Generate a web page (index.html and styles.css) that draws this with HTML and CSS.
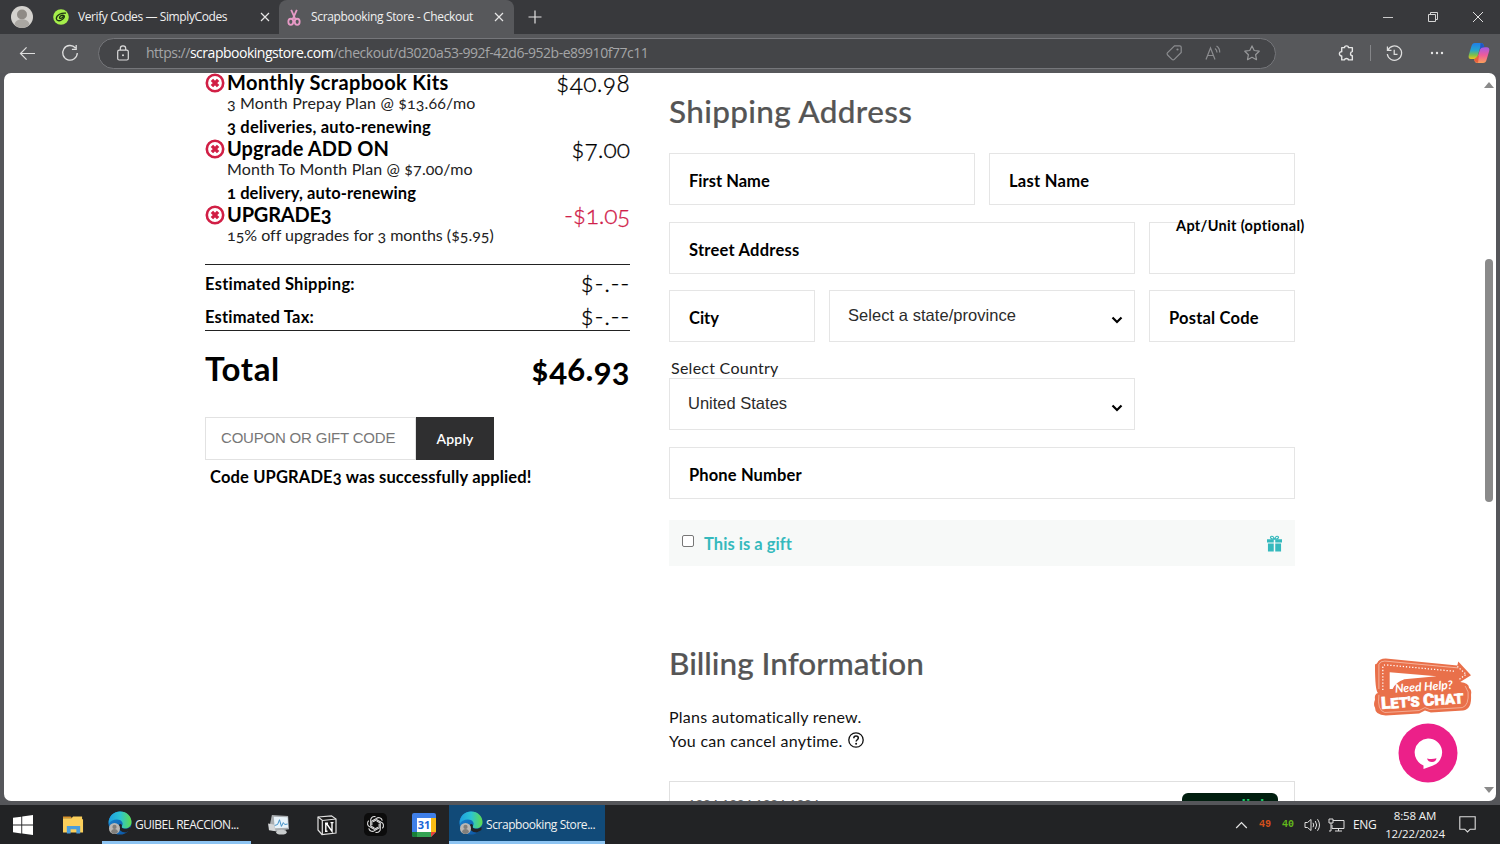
FILE: index.html
```html
<!DOCTYPE html>
<html lang="en">
<head>
<meta charset="utf-8">
<title>Scrapbooking Store - Checkout</title>
<link rel="stylesheet" href="styles.css">
</head>
<body>
<svg class="defs" width="0" height="0">
  <defs>
    <linearGradient id="edgeTop" x1="0" y1="0" x2="1" y2="0"><stop offset="0" stop-color="#1f9fe0"/><stop offset=".5" stop-color="#2cc3d2"/><stop offset="1" stop-color="#5fdc4c"/></linearGradient>
    <linearGradient id="edgeLow" x1="0" y1="0" x2="1" y2="1"><stop offset="0" stop-color="#1a8ad8"/><stop offset="1" stop-color="#0c4f9c"/></linearGradient>
    <linearGradient id="copA" x1="0" y1="0" x2="0" y2="1"><stop offset="0" stop-color="#1f7fe8"/><stop offset=".45" stop-color="#25a5cf"/><stop offset=".75" stop-color="#7cc04a"/><stop offset="1" stop-color="#f0c41c"/></linearGradient>
    <linearGradient id="copB" x1="0" y1="0" x2="0" y2="1"><stop offset="0" stop-color="#a15be8"/><stop offset=".5" stop-color="#ee5b9a"/><stop offset="1" stop-color="#fba05a"/></linearGradient>
    <symbol id="edge" viewBox="0 0 24 24">
      <circle cx="12" cy="12" r="11.500" fill="url(#edgeLow)"/>
      <path d="M.8 10C2 4 6.500.5 12 .5c7 0 11.500 5 11.500 10.500 0 4-3 6.500-6.500 6.500-2.500 0-4-1-3-2.500 2-3-.5-6.500-5-6.500C5 8.500 2 10 .8 13z" fill="url(#edgeTop)"/>
      <path d="M14 15c-1 1.500.5 2.800 3 2.800 2.500 0 4.500-.9 5.500-2.300v3.500L18 21.500c-5 0-8-3-7-7.500 1-2 3-.5 3 1z" class="edge-cut"/>
      <circle cx="6.500" cy="17.500" r="5.500" fill="#b9b7b4"/><circle cx="6.500" cy="15.900" r="2.100" fill="#807e7b"/><path d="M3 21c.3-4 6.700-4 7 0-1.800 2.500-5.200 2.500-7 0z" fill="#807e7b"/>
    </symbol>
    <symbol id="remove" viewBox="0 0 20 20"><circle cx="10" cy="10" r="8.200" fill="#fff" stroke="#d11f45" stroke-width="2.600"/><path d="M6.900 6.900l6.200 6.200M13.100 6.900l-6.200 6.200" stroke="#d11f45" stroke-width="3.400"/></symbol>
    <symbol id="close" viewBox="0 0 10 10"><path d="M1 1l8 8M9 1L1 9" fill="none" stroke="#e6e6e6" stroke-width="1.200"/></symbol>
    <symbol id="chev" viewBox="0 0 12 8"><path d="M1.500 1.500L6 6l4.500-4.500" fill="none" stroke="#000" stroke-width="2.200"/></symbol>
  </defs>
</svg>

<header class="titlebar">
  <svg class="avatar" viewBox="0 0 22 22"><circle cx="11" cy="11" r="11" fill="#d4d2ce"/><circle cx="11" cy="8.500" r="5" fill="#8f8b86"/><path d="M3.500 18.500c1-7 14-7 15 0-4 4.500-11 4.500-15 0z" fill="#aaa7a2"/></svg>
  <div class="tab">
    <svg class="tab-ic" viewBox="0 0 16 16"><circle cx="8" cy="8" r="7.800" fill="#a6ef4b"/><path d="M13 4.200C8.500 3.500 3.500 6 3.300 9.500c.2 2.500 3 2.800 5.200 1.500s3.200-3 2.700-4.200C9.500 5.500 6.300 7 6.500 9c1 1 2.500.3 4-1.800" fill="none" stroke="#1c3312" stroke-width="1.300"/></svg>
    <span class="tab-t t1">Verify Codes — SimplyCodes</span>
    <svg class="tab-x"><use href="#close"/></svg>
  </div>
  <div class="tab active">
    <svg class="tab-ic sc" viewBox="0 0 16 18"><g fill="none" stroke="#e79ac6" stroke-width="1.900"><path d="M5 1l4.500 10M11 1L6.500 11"/><ellipse cx="4.600" cy="13.500" rx="2.600" ry="3.200"/><ellipse cx="11.400" cy="13.500" rx="2.600" ry="3.200"/></g></svg>
    <span class="tab-t t2">Scrapbooking Store - Checkout</span>
    <svg class="tab-x"><use href="#close"/></svg>
  </div>
  <svg class="plus" viewBox="0 0 14 14"><path d="M7 .5v13M.5 7h13" stroke="#e3e3e3" stroke-width="1.200"/></svg>
  <div class="winctl">
    <svg viewBox="0 0 12 12"><path d="M1 6.500h10" stroke="#c9c9c9"/></svg>
    <svg viewBox="0 0 12 12"><path d="M1.500 3.500h7v7h-7zM3.500 3V1.500h7v7H9" fill="none" stroke="#d5d5d5"/></svg>
    <svg viewBox="0 0 12 12"><path d="M1 1l10 10M11 1L1 11" stroke="#e0e0e0"/></svg>
  </div>
</header>

<nav class="toolbar">
  <svg class="back" viewBox="0 0 18 16"><path d="M17 8H1.500M8 1.500L1.500 8 8 14.500" fill="none" stroke="#dedede" stroke-width="1.300"/></svg>
  <svg class="reload" viewBox="0 0 18 18"><path d="M14.500 4A7.300 7.300 0 1 0 16.300 9M15.200 1v4.300h-4.300" fill="none" stroke="#dedede" stroke-width="1.300"/></svg>
  <div class="omnibox">
    <svg class="lock" viewBox="0 0 12 16"><rect x=".7" y="5.200" width="10.600" height="9.800" rx="1.500" fill="none" stroke="#dcdcdc" stroke-width="1.200"/><path d="M3.300 5V3.500a2.700 2.700 0 0 1 5.400 0V5" fill="none" stroke="#dcdcdc" stroke-width="1.200"/><circle cx="6" cy="10.200" r="1" fill="#dcdcdc"/></svg>
    <span class="url">https://<b>scrapbookingstore.com</b>/checkout/d3020a53-992f-42d6-952b-e89910f77c11</span>
    <svg class="tag" viewBox="0 0 16 16"><path d="M8.500.8h5.200c.9 0 1.500.6 1.500 1.500v5.200L8.300 14.400c-.7.700-1.600.7-2.300 0L1.600 10c-.7-.7-.7-1.600 0-2.300z" fill="none" stroke="#8b8c8f" stroke-width="1.200"/><circle cx="11.500" cy="4.500" r="1.100" fill="#8b8c8f"/></svg>
    <svg class="read" viewBox="0 0 16 16"><path d="M1 14.500L5.500 3 10 14.500M2.700 10.500h5.600M10 3.500c1.500 1 2 2.200 2 4M11.500 1c2.500 1.500 3.300 3.500 3.200 6.500" fill="none" stroke="#8b8c8f" stroke-width="1.200"/></svg>
    <svg class="star" viewBox="0 0 16 16"><path d="M8 .9l2.200 4.600 5 .7-3.600 3.500.9 5L8 12.300l-4.500 2.400.9-5L.8 6.200l5-.7z" fill="none" stroke="#97989a" stroke-width="1.200" stroke-linejoin="round"/></svg>
  </div>
  <div class="tools">
    <svg class="ext" viewBox="0 0 16 16"><path d="M3.500 2.500h2.700c-.2-2.300 3.800-2.300 3.600 0h3.700v3.700c-2.300.2-2.300 3.800 0 3.800v4h-3.700c.2-1.800-3.800-1.800-3.600 0H3.500V10.300C.6 10.500.6 6 3.500 6.300z" fill="none" stroke="#e6e6e6" stroke-width="1.300" stroke-linejoin="round"/></svg>
    <i class="sep"></i>
    <svg class="hist" viewBox="0 0 18 18"><path d="M2 5.500A7.600 7.600 0 1 1 1.400 9.500M1.500 1.500v4.300h4.300M8.700 5v5h3.500" fill="none" stroke="#dedede" stroke-width="1.300"/></svg>
    <svg class="dots" viewBox="0 0 14 4"><g fill="#e6e6e6"><circle cx="2" cy="2" r="1.200"/><circle cx="7" cy="2" r="1.200"/><circle cx="12" cy="2" r="1.200"/></g></svg>
    <svg class="copilot" viewBox="0 0 22 22"><path d="M7 1h6c2 0 2.500 1.200 3.200 3.500L12 6 9.500 14.500C9 16.200 8 17 6 17H3C.8 17 .2 15.500.8 13L3.500 4C4.200 2 5 1 7 1z" fill="url(#copA)"/><path d="M15 21H9.500C7.500 21 6.500 20 6.200 17.500c2 0 3-1 3.500-3L12 7.500C12.500 6 13.500 5.200 15.500 5.200h3.300c2 0 3 1.500 2.400 3.800l-2.700 9C18 20 17 21 15 21z" fill="url(#copB)"/><path d="M12.500 1c2.500 0 3.200 1.500 3.900 4.200-2.500 0-3.500.5-4.400 2.300z" fill="#2257c4"/><path d="M6.200 17.500L11 13l-1 7.800c-2-.2-3.300-.8-3.800-3.300z" fill="#e8603a"/></svg>
  </div>
</nav>

<div class="viewport">
<main class="page">
  <section class="summary">
    <article class="item">
      <svg class="rm"><use href="#remove"/></svg>
      <div class="item-b">
        <h3><span class="k33">Monthly Scrapbook Kits</span></h3>
        <p><span class="k15">3 Month Prepay Plan @ $13.66/mo</span></p>
        <strong><span class="k20">3 deliveries, auto-renewing</span></strong>
      </div>
      <div class="price"><span class="k33">$40.98</span></div>
    </article>
    <article class="item">
      <svg class="rm"><use href="#remove"/></svg>
      <div class="item-b">
        <h3><span class="k07">Upgrade ADD ON</span></h3>
        <p><span class="k13">Month To Month Plan @ $7.00/mo</span></p>
        <strong><span class="k11">1 delivery, auto-renewing</span></strong>
      </div>
      <div class="price"><span class="k02">$7.00</span></div>
    </article>
    <article class="item last">
      <svg class="rm"><use href="#remove"/></svg>
      <div class="item-b">
        <h3><span class="m20">UPGRADE3</span></h3>
        <p><span>15% off upgrades for 3 months ($5.95)</span></p>
      </div>
      <div class="price off"><span class="m30">-$1.05</span></div>
    </article>
    <div class="est">
      <div class="row"><b><span class="k26">Estimated Shipping:</span></b><em><span class="k65">$-.--</span></em></div>
      <div class="row"><b><span class="k20">Estimated Tax:</span></b><em><span class="k65">$-.--</span></em></div>
    </div>
    <div class="total"><span class="k65">Total</span><span class="k33">$46.93</span></div>
    <div class="coupon"><div class="code"><span class="m20">COUPON OR GIFT CODE</span></div><button><span class="k20">Apply</span></button></div>
    <p class="applied"><span class="k15">Code UPGRADE3 was successfully applied!</span></p>
  </section>

  <section class="form">
    <h2><span class="k33">Shipping Address</span></h2>
    <div class="grid">
      <div class="f s6"><span class="k02">First Name</span></div>
      <div class="f s6"><span class="k28">Last Name</span></div>
      <div class="f s9"><span class="k24">Street Address</span></div>
      <div class="f s3 apt"><span class="float k33">Apt/Unit (optional)</span></div>
      <div class="f s3"><span>City</span></div>
      <div class="f s6 sel"><span class="k05">Select a state/province</span><svg><use href="#chev"/></svg></div>
      <div class="f s3"><span class="k20">Postal Code</span></div>
    </div>
    <div class="country-l"><span class="k26">Select Country</span></div>
    <div class="grid">
      <div class="f s9 sel"><span>United States</span><svg><use href="#chev"/></svg></div>
      <div class="f s12"><span class="k13">Phone Number</span></div>
    </div>
    <div class="gift">
      <i class="box"></i><span class="k05">This is a gift</span>
      <svg viewBox="0 0 16 17"><g fill="#35b9bd"><path d="M0 4h7.200v3.500H0zM8.800 4H16v3.500H8.800zM1 8.500h6.200V17H1zM8.800 8.500H15V17H8.800z"/></g><g fill="none" stroke="#35b9bd" stroke-width="1.200"><path d="M7.500 4C3 4 3 .8 5 .8S7.500 3 7.500 4zM8.500 4C13 4 13 .8 11 .8S8.500 3 8.500 4z"/></g></svg>
    </div>
    <h2 class="bill"><span>Billing Information</span></h2>
    <div class="renew"><p><span class="k26">Plans automatically renew.</span></p><p><span class="k28">You can cancel anytime.</span>
      <svg viewBox="0 0 16 16"><circle cx="8" cy="8" r="7.200" fill="none" stroke="#111" stroke-width="1.300"/><path d="M5.800 6.300c0-3 4.500-2.800 4.500-.2 0 1.600-2.200 1.700-2.200 3.400" fill="none" stroke="#111" stroke-width="1.500"/><circle cx="8.100" cy="11.800" r="1" fill="#111"/></svg></p></div>
    <div class="card"><span class="m28">1234 1234 1234 1234</span><div class="link">link</div></div>
  </section>
</main>
<div class="chat">
  <svg class="sign" viewBox="0 0 100 60">
    <path d="M3 5Q5 0 12 0L85 7 86 3 99 17 88 24Q97 25 97 30Q100 32 99 37Q100 52 91 53L58 55 52 53 46 56 12 58Q1 58 1 50Q-1 47 1 42Q0 36 4 35Q1 33 1 6z" fill="#e9704a"/>
    <path d="M16 14L16 31 19 31Q22 24 31 21L64 18z" fill="#fff"/>
    <path d="M9 32V9Q9 6 13 6.500L83 13 M85 8l9 8-8 6" fill="none" stroke="#fff" stroke-width="1.300" stroke-dasharray="1.300 1.900"/>
    <path d="M5 31V6Q6 2.500 11 2.500L86 9.500" fill="none" stroke="#f8c4b1" stroke-width=".8"/>
    <path d="M5 37Q3 53 11 55L46 53 52 50 57 52 90 50Q97 48 96 34L93 28" fill="none" stroke="#f7bda8" stroke-width=".8"/>
    <g transform="rotate(-4 50 40)" fill="#fff"><text x="22" y="33" class="help" textLength="59" lengthAdjust="spacingAndGlyphs">Need Help?</text><text x="7" y="48.500" class="lets" textLength="84" lengthAdjust="spacingAndGlyphs">L<tspan class="small">ET'S </tspan>C<tspan class="small">HAT</tspan></text></g>
  </svg>
  <svg class="bubble" viewBox="0 0 60 60"><circle cx="30" cy="30" r="29.500" fill="#ec2089"/><path d="M30 15.500a14 14 0 0 1 4.500 27.300L25.500 46v-3.500A14 14 0 0 1 30 15.500z" fill="#fff"/><path d="M29 35.500q5 1.300 9.500-.2-.5 3.500-4.500 3.700-4 0-5-3.500z" fill="#ec2089"/></svg>
</div>
<div class="scroll"><i class="up"></i><i class="thumb"></i><i class="down"></i></div>
</div>

<footer class="taskbar">
  <svg class="win" viewBox="0 0 20 20"><path d="M0 2.800L8.300 1.700v7.900H0zM9.200 1.600L20 0v9.600H9.200zM0 10.500h8.300v7.900L0 17.300zM9.200 10.500H20V20L9.200 18.500z" fill="#fff"/></svg>
  <svg class="fold" viewBox="0 0 22 19"><path d="M0 1h8l1.500 2H0z" fill="#d8922a"/><path d="M0 3h9l1.500-2H20v3h1v14H0z" fill="#fbcf5b"/><path d="M4 19v-8h14v8h-4v-4.500H8V19z" fill="#4a9ddb"/></svg>
  <div class="task t-a"><svg><use href="#edge"/></svg><span>GUIBEL REACCION...</span></div>
  <svg class="mon" viewBox="0 0 24 22"><path d="M4 1l17 1 1 14-14 2-7-2z" fill="#a9adb0"/><path d="M6 3l14.500.5.5 11-14 .5z" fill="#e8f3fa"/><path d="M7 12l3-1 2-5 2 7 2-4 1.500 2 3-.5" fill="none" stroke="#3c8dc4" stroke-width="1"/><ellipse cx="14" cy="19" rx="5.500" ry="2.500" fill="#c9cccd"/><path d="M0 10l6 1 2 7-7-1z" fill="#d4d6d7"/></svg>
  <svg class="notion" viewBox="0 0 20 20"><path d="M1 2L14.500.8 19 4v14L5 19.500 1 15z" fill="#1a1a1a" stroke="#e2e2e2" stroke-width="1.200"/><path d="M1 2l4.500 3.500L19 4M5.300 5.500V19" fill="none" stroke="#e2e2e2" stroke-width="1.200"/><path d="M8 8.200h3M8.800 8.500v7.800M8 16.300h2.500M9.500 8.500l5.500 7.800V7.600M13.500 7.600h3" fill="none" stroke="#fff" stroke-width="1.400"/></svg>
  <svg class="gpt" viewBox="0 0 24 24"><rect width="24" height="24" rx="5" fill="#0c0c0c"/><g fill="none" stroke="#d9d9d9" stroke-width="1.200"><path id="petal" d="M12 3.800C8.500 3 6.600 5.800 7 8v5.500l3.800 2.200"/><use href="#petal" transform="rotate(60 12 12)"/><use href="#petal" transform="rotate(120 12 12)"/><use href="#petal" transform="rotate(180 12 12)"/><use href="#petal" transform="rotate(240 12 12)"/><use href="#petal" transform="rotate(300 12 12)"/></g></svg>
  <svg class="cal" viewBox="0 0 24 24"><rect width="24" height="24" rx="2" fill="#3f7fe8"/><path d="M19 5h5v14h-5z" fill="#f9bc15"/><path d="M5 19h14v5H5z" fill="#34a353"/><path d="M0 19h5v5H2q-2 0-2-2z" fill="#188038"/><path d="M24 24v-5l-5 5z" fill="#222"/><path d="M19 24v-5h5z" fill="#ea4335"/><path d="M5 5h14v14H5z" fill="#fff"/><text x="12" y="16.300" text-anchor="middle" class="cal-t">31</text></svg>
  <div class="task t-b"><svg><use href="#edge"/></svg><span>Scrapbooking Store...</span></div>
  <div class="tray">
    <svg class="caret" viewBox="0 0 12 8"><path d="M.7 7L6 1.500 11.300 7" fill="none" stroke="#e5e5e5" stroke-width="1.200"/></svg>
    <span class="n o">49</span><span class="n g">40</span>
    <svg class="vol" viewBox="0 0 17 14"><path d="M1 4.500h2.500L7 1.500v11L3.500 9.500H1zM9 4.800q1.500 2.200 0 4.400M11.300 3q2.700 4 0 8M13.500 1.200q4 5.800 0 11.600" fill="none" stroke="#dedede"/></svg>
    <svg class="net" viewBox="0 0 17 14"><path d="M5 2.500h11v8H4V7M7 13h7M10.500 10.500V13M1 1h4v4H1zM3 5v8H1" fill="none" stroke="#dedede"/></svg>
    <span class="eng">ENG</span>
    <div class="clock"><span>8:58 AM</span><span>12/22/2024</span></div>
    <svg class="note" viewBox="0 0 17 17"><path d="M.8.800h15.400v12.400h-5L8.500 16l-2.700-2.800h-5z" fill="none" stroke="#dedede" stroke-width="1.100"/></svg>
  </div>
</footer>
</body>
</html>
```
FILE: styles.css
```css
* { box-sizing: border-box; margin: 0; padding: 0; }
body { width: 1500px; height: 844px; overflow: hidden; background: #55565a; font-family: Lato, sans-serif; color: #000; display: flex; flex-direction: column; font-variant-numeric: oldstyle-nums; font-variant-ligatures: none; }
span { white-space: pre; }
svg { display: block; flex: none; overflow: visible; }
.defs { position: absolute; }
em { font-style: normal; }

/* tracking steps */
.m30 { letter-spacing: -.3px; } .m28 { letter-spacing: -.28px; } .m20 { letter-spacing: -.2px; }
.k02 { letter-spacing: .02px; } .k05 { letter-spacing: .05px; } .k07 { letter-spacing: .07px; } .k11 { letter-spacing: .11px; } .k13 { letter-spacing: .13px; }
.k15 { letter-spacing: .15px; } .k20 { letter-spacing: .2px; } .k24 { letter-spacing: .24px; } .k26 { letter-spacing: .26px; }
.k28 { letter-spacing: .28px; } .k33 { letter-spacing: .34px; } .k65 { letter-spacing: .65px; }

/* browser chrome */
.titlebar { height: 34px; flex: none; background: #38393c; display: flex; align-items: center; font: 12px "Open Sans", sans-serif; color: #f0f0f0; padding-left: 11px; }
.avatar { width: 22px; height: 22px; margin-right: 9px; }
.tab { height: 34px; width: 237px; display: flex; align-items: center; padding: 0 9px 0 11px; }
.tab.active { background: #57585b; border-radius: 8px 8px 0 0; width: 235px; padding: 0 10px 0 7px; }
.tab-ic { width: 16px; height: 16px; margin-right: 9px; }
.tab-ic.sc { height: 17px; }
.tab-t { flex: 1; padding-bottom: 2px; }
.t1 { letter-spacing: -.4px; }
.t2 { letter-spacing: -.34px; }
.tab-x { width: 10px; height: 10px; }
.plus { width: 14px; height: 14px; margin-left: 14px; }
.winctl { margin-left: auto; display: flex; gap: 33px; margin-right: 16px; }
.winctl svg { width: 12px; height: 12px; }
.toolbar { height: 39px; flex: none; background: #57585b; display: flex; align-items: center; padding: 0 10px 1px 19px; }
.back { width: 17px; height: 15px; margin-right: 25px; }
.reload { width: 18px; height: 18px; margin-right: 19px; }
.omnibox { width: 1178px; height: 31px; border: 1px solid #75767a; border-radius: 16px; background: #444548; display: flex; align-items: center; padding: 0 15px 0 18px; }
.lock { width: 12px; height: 16px; margin-right: 17px; }
.url { flex: 1; font: 14px "Open Sans", sans-serif; color: #a4a5a7; letter-spacing: -.48px; padding-bottom: 1px; }
.url b { font-weight: 400; color: #fff; }
.tag, .read, .star { width: 16px; height: 16px; }
.read, .star { margin-left: 23px; }
.tools { flex: 1; display: flex; align-items: center; justify-content: flex-end; }
.ext { width: 17px; height: 17px; }
.sep { width: 1px; height: 16px; background: #858689; margin: 0 15px; }
.hist { width: 17px; height: 17px; }
.dots { width: 14px; height: 4px; margin: 0 24px 0 27px; }
.copilot { width: 22px; height: 22px; }

/* page */
.viewport { position: relative; height: 728px; flex: none; margin: 0 4px; background: #fff; border-radius: 7px; overflow: hidden; }
.page { display: flex; gap: 39px; padding-left: 201px; }
.summary { width: 425px; }
.item { height: 66px; display: flex; }
.item.last { height: 58px; }
.rm { width: 20px; height: 20px; margin-right: 2px; }
.item-b { flex: 1; }
h3 { font-size: 20px; line-height: 18px; font-weight: 700; }
.item p { font-size: 16px; line-height: 24px; font-weight: 400; color: #222; }
.item strong { display: block; font-size: 16.500px; line-height: 24px; font-weight: 700; }
.price { font-size: 24.500px; line-height: 20px; font-weight: 300; -webkit-text-stroke: .3px currentColor; }
.price.off { color: #d0214a; }
.est { margin-top: 1px; border-top: 1px solid #222; border-bottom: 1px solid #222; height: 67px; }
.row { display: flex; justify-content: space-between; height: 33px; line-height: 36px; }
.row b { font-size: 16.500px; line-height: 38px; }
.row em { font-size: 24.500px; font-weight: 300; -webkit-text-stroke: .3px currentColor; }
.total { display: flex; justify-content: space-between; height: 86px; line-height: 75px; font-size: 33px; font-weight: 700; }
.coupon { display: flex; height: 43px; }
.code { width: 211px; border: 1px solid #e2e2e2; padding-left: 15px; font: 15px/40px "Liberation Sans", Arial, sans-serif; color: #777; }
button { width: 78px; border: 0; background: #2f2f30; color: #fff; font: 600 14px Lato, sans-serif; }
.applied { font-size: 16.500px; font-weight: 700; line-height: 34px; padding-left: 5px; }

.form { width: 626px; }
h2 { font-size: 31.500px; font-weight: 500; color: #555; line-height: 42px; padding-top: 17px; margin-bottom: 21px; -webkit-text-stroke: .2px #555; }
.grid { display: grid; grid-template-columns: repeat(12, 1fr); gap: 16.500px 14px; }
.f { height: 52px; border: 1px solid #e5e5e5; padding-left: 19px; font-weight: 700; font-size: 16.500px; line-height: 54px; position: relative; }
.s3 { grid-column: span 3; } .s6 { grid-column: span 6; } .s9 { grid-column: span 9; } .s12 { grid-column: span 12; }
.sel { display: flex; justify-content: space-between; font: 16.500px/48px "Liberation Sans", Arial, sans-serif; color: #2b2b2b; padding: 0 11px 0 18px; }
.sel svg { width: 12px; height: 8px; margin-top: 25px; }
.float { position: absolute; left: 26px; top: -7px; font-size: 14.500px; line-height: 20px; }
.country-l { font-size: 16px; line-height: 19px; padding: 16px 0 1px 2px; color: #222; }
.gift { margin-top: 21.500px; height: 46px; background: #f7f9f8; display: flex; align-items: center; padding: 0 13px; color: #35b9bd; font-weight: 700; font-size: 16.500px; }
.gift span { padding-top: 1px; }
.gift svg { width: 15px; height: 17px; margin-left: auto; }
.box { width: 12px; height: 12px; border: 1px solid #777; border-radius: 2px; background: #fff; margin: -4px 10px 0 0; }
.bill { padding-top: 76px; margin-bottom: 21px; }
.renew p { font-size: 16px; line-height: 24px; display: flex; align-items: center; gap: 5px; color: #111; }
.renew svg { width: 16px; height: 16px; margin-top: -2px; }
.card { margin-top: 28px; height: 52px; border: 1px solid #e0e0e0; display: flex; justify-content: space-between; padding: 11px 16px 0 18px; font: 14px/24px "Liberation Sans", Arial, sans-serif; color: #666; font-variant-numeric: lining-nums; }
.link { width: 96px; height: 32px; border-radius: 6px; background: #011e0f; text-align: right; padding: 1px 9px 0 0; color: #1fc96a; font-size: 16px; font-weight: 700; }

.chat { position: absolute; right: 24px; top: 585px; display: flex; flex-direction: column; align-items: center; }
.sign { width: 98px; height: 60px; }
.bubble { width: 60px; height: 60px; margin: 5px 0 0 10px; }
.help { font: italic 700 12px Lato, sans-serif; }
.lets { font: 900 17px Roboto, sans-serif; stroke: #fff; stroke-width: .6px; }
.small { font-size: 14.500px; }
.scroll { position: absolute; right: 3px; top: 0; width: 9px; height: 728px; display: flex; flex-direction: column; align-items: center; }
.up { border: 5px solid transparent; border-bottom: 6px solid #8a8a8a; border-top: 0; margin-top: 9px; }
.thumb { width: 8px; height: 243px; border-radius: 4px; background: #8a8a8a; margin-top: 171px; }
.down { border: 5px solid transparent; border-top: 6px solid #8a8a8a; border-bottom: 0; margin-top: 285px; }

/* taskbar */
.taskbar { margin-top: 4px; height: 39px; flex: none; background: #222325; display: flex; align-items: center; font: 12px "Open Sans", sans-serif; color: #f2f2f2; padding-left: 13px; font-variant-numeric: lining-nums; }
.win { width: 20px; height: 20px; margin-right: 30px; }
.fold { width: 21px; height: 19px; margin-right: 18px; }
.task { height: 39px; display: flex; align-items: center; gap: 3px; border-bottom: 3px solid #8dc4f2; padding-left: 6px; }
.task svg { width: 24px; height: 24px; }
.task span { padding-top: 2px; }
.t-a { width: 149px; letter-spacing: -.5px; }
.t-b { width: 156px; background: #114a78; padding-left: 10px; letter-spacing: -.44px; }
.edge-cut { fill: #222325; }
.t-b .edge-cut { fill: #114a78; }
.mon { width: 23px; height: 21px; margin: 0 26px 0 17px; }
.notion { width: 20px; height: 20px; margin-right: 27px; }
.gpt { width: 23px; height: 23px; margin-right: 25px; }
.cal { width: 24px; height: 24px; margin-right: 13px; }
.cal-t { font: 700 11px "Open Sans", sans-serif; fill: #1a66d6; }
.tray { margin-left: auto; display: flex; align-items: center; padding-right: 24px; }
.caret { width: 13px; height: 8px; margin-right: 11px; }
.n { font: 700 10px "Liberation Mono", monospace; width: 12px; margin-right: 11px; }
.o { color: #d5501c; } .g { color: #62b81c; margin-right: 10px; }
.vol { width: 17px; height: 14px; margin-right: 7px; }
.net { width: 17px; height: 14px; margin-right: 8px; }
.eng { width: 24px; letter-spacing: -.3px; }
.clock { width: 60px; margin: 0 14px 0 8px; line-height: 18px; display: flex; flex-direction: column; align-items: center; font-size: 11.500px; letter-spacing: -.13px; }
.note { width: 17px; height: 17px; }
```
